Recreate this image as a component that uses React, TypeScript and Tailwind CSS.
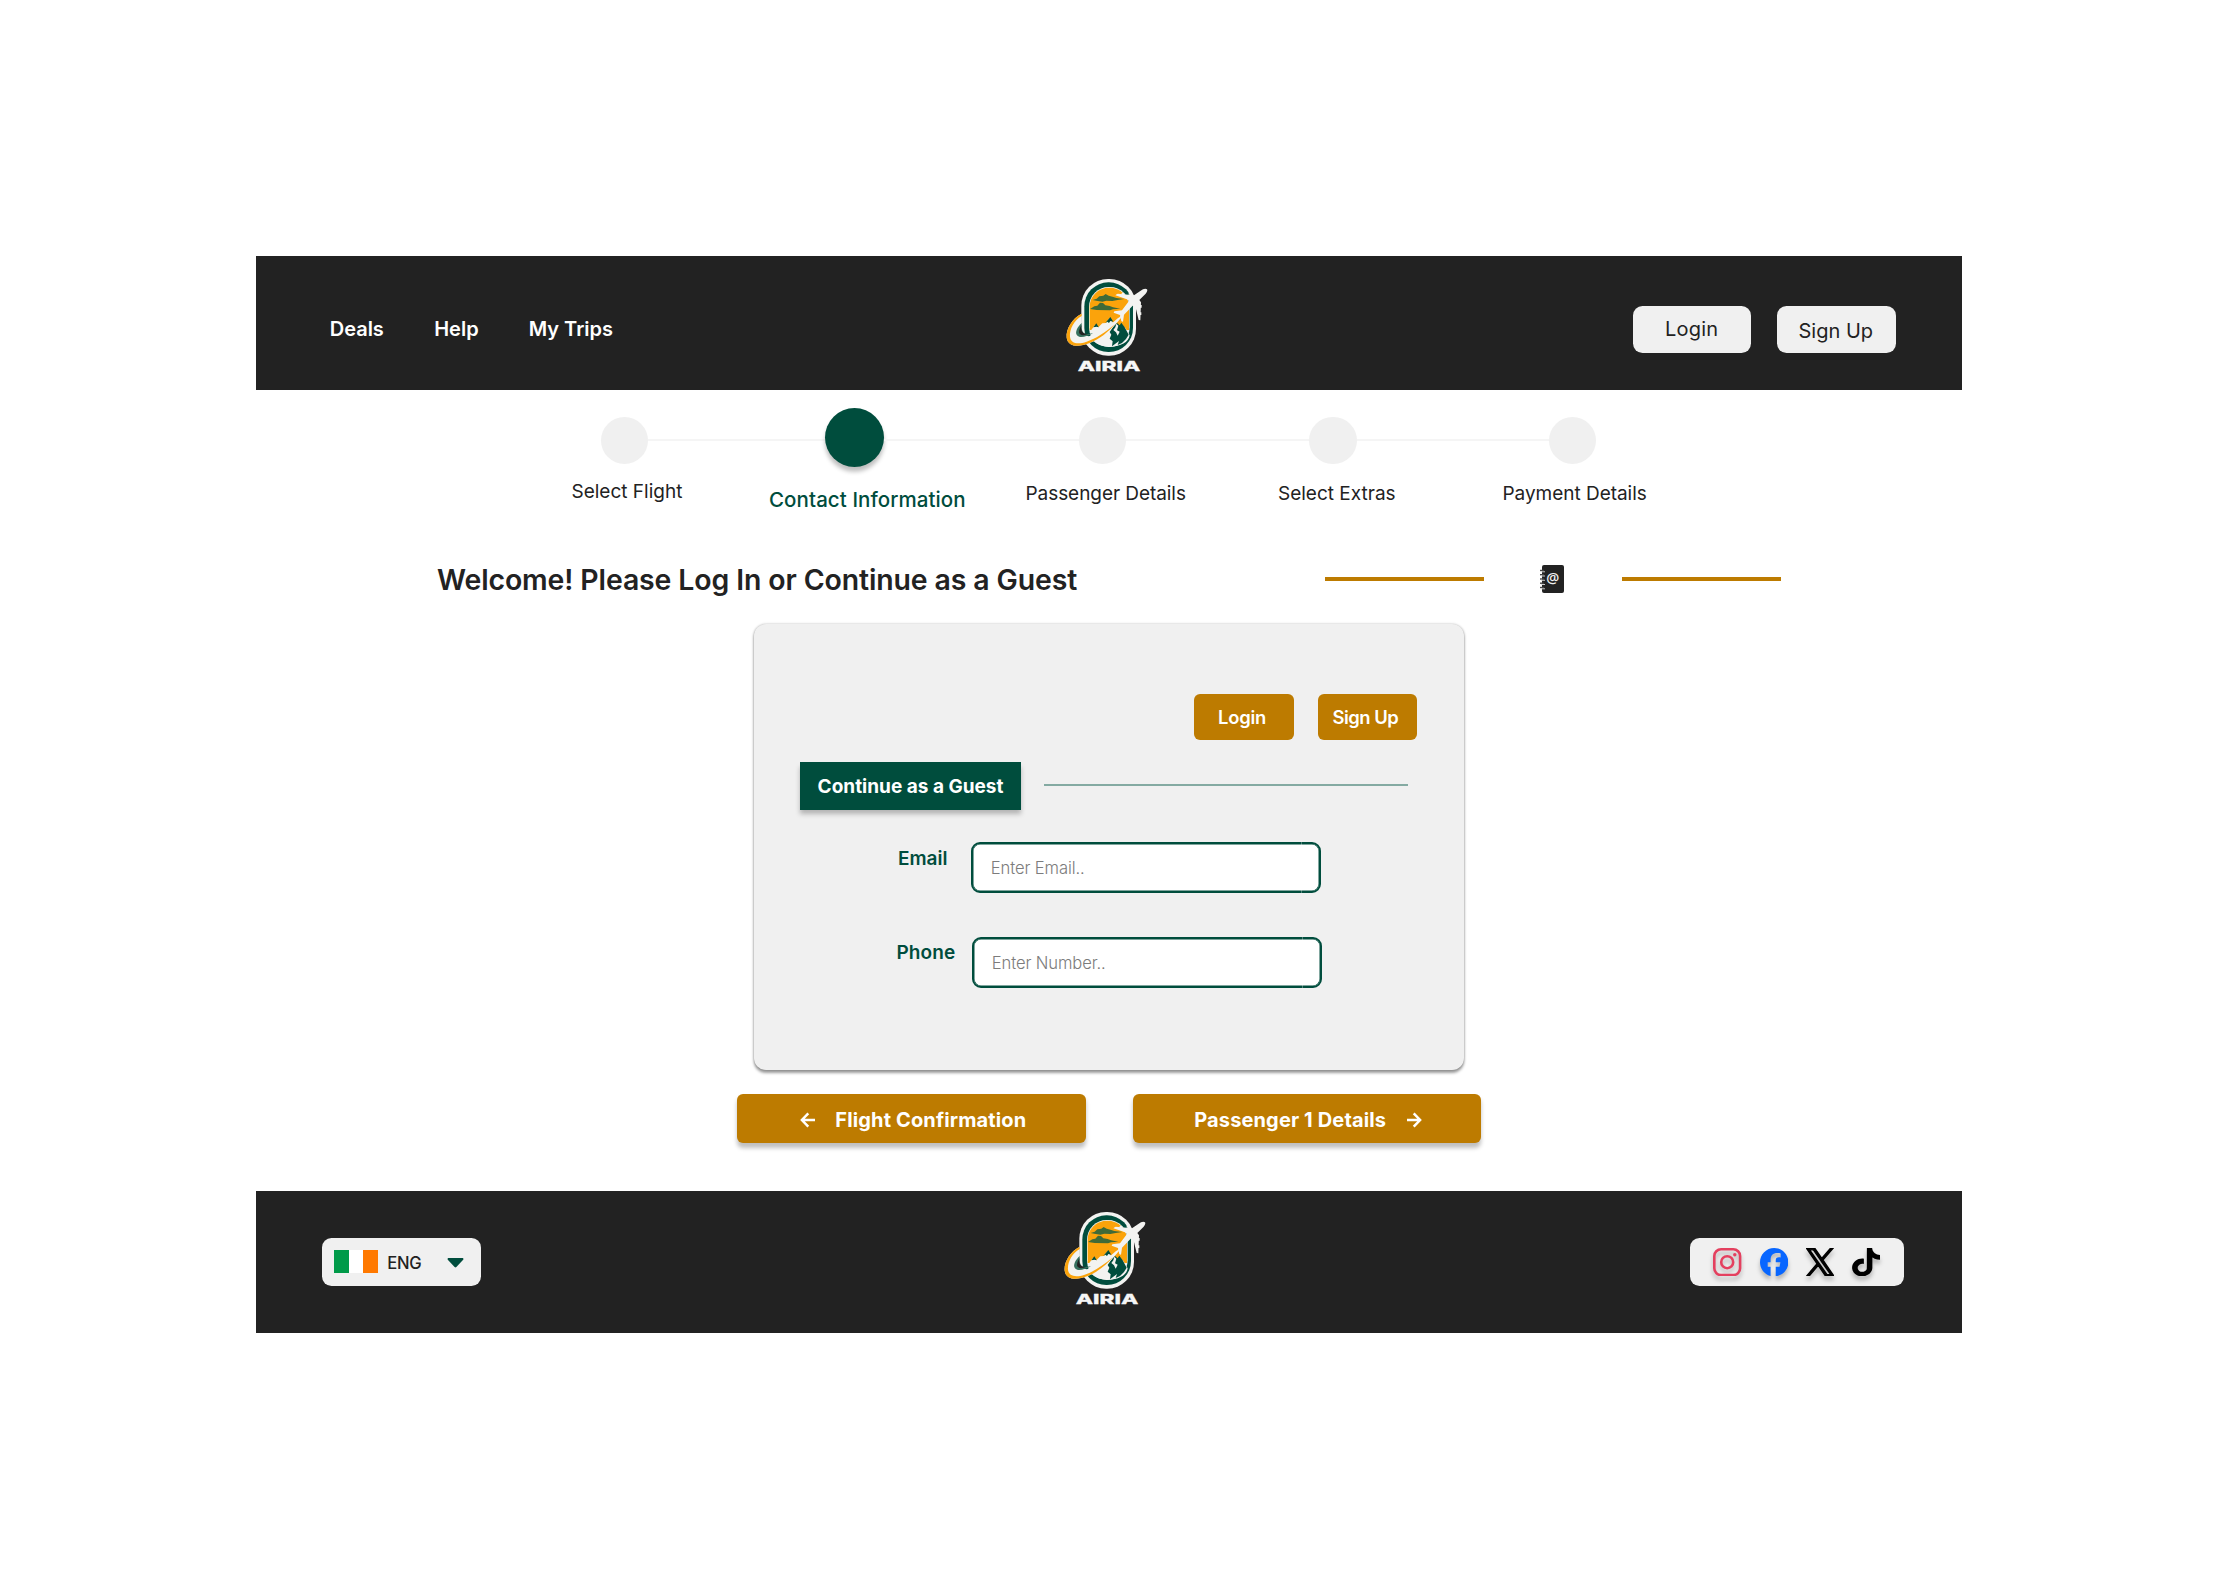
import type { ReactNode } from "react";

function Logo() {
  return (
    <svg viewBox="0 0 360 360" className="h-[120px] w-[120px] shrink-0">
      <rect x="94" y="42" width="164" height="230" rx="80" fill="#f3f3f1" />
      <rect x="103" y="52" width="146" height="209" rx="72" fill="#004d3d" />
      <rect x="117" y="66" width="122" height="180" rx="59" fill="#f3f3f1" />
      <path d="M119 125C119 92 145 68 178 68S237 92 237 125V195H119Z" fill="#fba30b" />
      <path d="M128 105l12-4 8-7 12-2 7-5 9 5 14 4 9 3 24 3-20 3-16 3-18-1-12 3-18-3z" fill="#3f6a38" />
      <path d="M120 132l13-8 9-2 8-9 9 1 7 7 13 2 10 4 22 4-22 2-9 3-40-1z" fill="#3f6a38" />
      <path d="M196 86l20 6 24 12-26-9z" fill="#f3f3f1" />
      <path d="M119 201l17-22 9 8 12-12 11-1 11-16 9 14 10 6 8 8 8-8 12 11 13 22C236 232 212 245 180 245S122 232 119 201Z" fill="#f3f3f1" />
      <path d="M130 187l9-12 7 12-6-2zM166 174l15-18 9 14-9-2-4 6-5-4z" fill="#004d3d" />
      <path d="M193 181l8-7 8 7 5-8 10 14 12 22-8 13-12 12-13 6 4-12-13 10-8 6 2-15-9-8 5-12-5-8z" fill="#004d3d" />
      <path d="M199 176l6 6-4 14 8 4-6 12-5-10-8-7 6-8z" fill="#f3f3f1" />
      <path d="M95 146C66 160 47 194 50 218C54 246 86 247 117 235C158 220 190 188 213 158L205 158C178 183 145 208 116 214L96 208Z" fill="#f3f3f1" />
      <path d="M95 146C66 160 47 194 50 218C54 246 86 247 117 235C150 222 176 200 194 178C166 202 138 221 110 230C83 239 62 235 60 215C58 193 72 166 95 153Z" fill="#fba30b" />
      <path d="M95 174C82 186 74 202 81 211C89 222 112 214 129 205L112 207C98 208 94 198 95 174Z" fill="#37715f" />
      <path d="M95 180C91 194 96 208 114 207C100 213 88 211 87 202C87 194 91 186 95 180Z" fill="#222" />
      <path d="M291 73C286 69 279 72 272 77L252 91L203 86L196 91L231 103L237 108L216 136L193 139L191 143L210 150L214 169L219 170L222 149L248 122L256 124L266 165L271 166L273 112L268 105L287 86C292 80 293 76 291 73Z" fill="#f3f3f1" />
      <path d="M222 146C210 162 188 181 166 192C183 181 204 164 217 146Z" fill="#f3f3f1" />
      <path d="M268 120h7v8h-7zM267 142h7v8h-7zM215 84h8v6h-8zM236 81h8v8h-8z" fill="#f3f3f1" />
      <text x="83" y="317" fontFamily="Inter" fontWeight="800" fontSize="41" fill="#f6f6f6" stroke="#f6f6f6" strokeWidth="0.8" textLength="188" lengthAdjust="spacingAndGlyphs">
        AIRIA
      </text>
    </svg>
  );
}

function AddressBookIcon() {
  return (
    <svg viewBox="0 0 24 28" className="mt-[4.9px] ml-[56px] h-[28px] w-[24px] shrink-0">
      <rect x="2" y="0" width="22" height="28" rx="2" fill="#222" />
      {[5.5, 9.7, 14, 18.2, 22.5].map((y) => (
        <g key={y}>
          <path d={`M0 ${y}h4`} stroke="#444" strokeWidth="1.4" />
          <path d={`M1 ${y + 1.3}h4`} stroke="#ddd" strokeWidth="0.9" />
        </g>
      ))}
      <text x="12.8" y="18.2" textAnchor="middle" fontFamily="Open Sans" fontWeight="600" fontSize="14.5" fill="#f0f0f0">
        @
      </text>
    </svg>
  );
}

function Arrow({ left = false }: { left?: boolean }) {
  return (
    <svg viewBox="0 0 16 16" className="mt-[4px] h-[16px] w-[16px] shrink-0" fill="none" stroke="#fff" strokeWidth="2.5">
      {left ? <path d="M15 8H2M8.3 1.3L1.9 8l6.4 6.7" /> : <path d="M1 8h13M7.7 1.3L14.1 8l-6.4 6.7" />}
    </svg>
  );
}

function Dot() {
  return <div className="mt-[9.5px] size-[47.4px] shrink-0 rounded-full bg-[#f0f0f0]" />;
}

function Field({ label, placeholder, className, labelClass }: { label: string; placeholder: string; className: string; labelClass: string }) {
  return (
    <div className={`flex items-start ${className}`}>
      <label className={`mt-[4.3px] shrink-0 text-[19px] leading-[24px] font-semibold text-[#004d3d] ${labelClass}`}>{label}</label>
      <div className="relative flex h-[50.4px] w-[350px] items-start rounded-[9px] border-[2px] border-[#004d3d] bg-white pt-[12.2px] pl-[17.8px] shadow-[inset_0_0_0_0.5px_#004d3d]">
        <span className="text-[16.6px] leading-[24px] font-light tracking-[-0.12px] text-[#7c7c7c]">{placeholder}</span>
        <i className="absolute -top-[2px] right-[17px] h-[3px] w-px bg-white/30" />
        <i className="absolute right-[17px] -bottom-[2px] h-[3px] w-px bg-white/30" />
      </div>
    </div>
  );
}

function HeaderButton({ children, className }: { children: ReactNode; className: string }) {
  return (
    <button className={`flex h-[47.4px] w-[118.5px] items-start rounded-[9.5px] bg-[#f0f0f0] text-[20px] leading-[24px] text-[#222] ${className}`}>
      {children}
    </button>
  );
}

export default function App() {
  return (
    <div className="h-[1589px] w-[2219px] overflow-hidden bg-white px-[256px] pt-[256px] font-['Inter',sans-serif] whitespace-nowrap text-[#222]">
      <header className="flex h-[133.5px] w-[1706px] items-start bg-[#222]">
        <nav className="flex w-[794px] pt-[61.2px] pl-[73.7px] text-[20px] leading-[24px] font-semibold text-white">
          <a className="w-[104.5px]">Deals</a>
          <a className="w-[94.5px]">Help</a>
          <a>My Trips</a>
        </nav>
        <div className="pt-[9px]">
          <Logo />
        </div>
        <div className="flex gap-[26px] pt-[49.6px] pl-[462.5px]">
          <HeaderButton className="pt-[11.7px] pl-[32.5px] tracking-[0.2px]">Login</HeaderButton>
          <HeaderButton className="pt-[13.2px] pl-[21.5px]">Sign Up</HeaderButton>
        </div>
      </header>

      <main className="h-[801px]">
        <div className="flex h-[78px] items-start pt-[18px] pl-[344.6px]">
          <Dot />
          <div className="mt-[31.5px] h-[2px] w-[176.8px] bg-[#f5f5f5]" />
          <div className="size-[59.3px] shrink-0 rounded-full bg-[#004d3d] shadow-[0_4.7px_4.7px_rgba(0,0,0,0.25)]" />
          <div className="mt-[31.5px] h-[2px] w-[195px] bg-[#f5f5f5]" />
          <Dot />
          <div className="mt-[31.5px] h-[2px] w-[183px] bg-[#f5f5f5]" />
          <Dot />
          <div className="mt-[31.5px] h-[2px] w-[192px] bg-[#f5f5f5]" />
          <Dot />
        </div>
        <div className="grid h-[92.5px] grid-cols-[197.5px_256.5px_252.5px_224.5px_auto] pt-[12.3px] pl-[315.5px] text-[19px] leading-[24px]">
          <span>Select Flight</span>
          <span className="pt-[8.5px] text-[20.5px] font-medium tracking-[0.08px] text-[#004d3d]">Contact Information</span>
          <span className="pt-[2.6px] tracking-[-0.06px]">Passenger Details</span>
          <span className="pt-[2.6px]">Select Extras</span>
          <span className="pt-[2.6px] tracking-[-0.03px]">Payment Details</span>
        </div>

        <div className="flex h-[64px] items-start">
          <h1 className="w-[1068.5px] pl-[181px] text-[28.44px] leading-[40px] font-semibold tracking-[-0.12px]">
            Welcome! Please Log In or Continue as a Guest
          </h1>
          <div className="mt-[17.2px] h-[3.6px] w-[159px] bg-[#bd7b00]" />
          <AddressBookIcon />
          <div className="mt-[17.2px] ml-[58px] h-[3.6px] w-[159px] bg-[#bd7b00]" />
        </div>

        <section className="ml-[498px] h-[445.5px] w-[710px] rounded-[12px] bg-[#f0f0f0] pt-[70px] shadow-[0_2.4px_3px_rgba(0,0,0,0.38),0_0_2.4px_rgba(0,0,0,0.25)]">
          <div className="flex gap-[24px] pl-[440px] text-[18.4px] leading-[24px] font-semibold text-white">
            <button className="flex h-[45.5px] w-[99.5px] rounded-[6px] bg-[#bd7b00] pt-[11.4px] pl-[24px] tracking-[-0.2px]">Login</button>
            <button className="flex h-[45.5px] w-[99.5px] rounded-[6px] bg-[#bd7b00] pt-[11.4px] pl-[15px] tracking-[-0.5px]">Sign Up</button>
          </div>
          <div className="mt-[22.8px] flex h-[80px] items-start pl-[46px]">
            <div className="h-[47.8px] w-[221px] bg-[#004d3d] pt-[13px] pl-[17.6px] text-[19px] leading-[24px] font-bold text-white shadow-[0_4.7px_4.7px_rgba(0,0,0,0.25)]">
              Continue as a Guest
            </div>
            <div className="mt-[21.5px] ml-[23px] h-[2px] w-[363.5px] bg-[#84aaa2]" />
          </div>
          <Field label="Email" placeholder="Enter Email.." className="pl-[144px]" labelClass="w-[73px]" />
          <Field label="Phone" placeholder="Enter Number.." className="mt-[44.5px] pl-[142.5px]" labelClass="w-[75.5px] tracking-[0.1px]" />
        </section>

        <div className="mt-[24.9px] flex gap-[47px] pl-[481px] text-[20px] leading-[24px] font-bold tracking-[0.14px] text-white">
          <button className="flex h-[48.6px] w-[348.5px] rounded-[6px] bg-[#bd7b00] pt-[13.4px] pl-[62.5px] shadow-[0_4.7px_4.7px_rgba(0,0,0,0.25)]">
            <Arrow left />
            <span className="pl-[19.8px]">Flight Confirmation</span>
          </button>
          <button className="flex h-[48.6px] w-[348.5px] rounded-[6px] bg-[#bd7b00] pt-[13.4px] pl-[61.7px] shadow-[0_4.7px_4.7px_rgba(0,0,0,0.25)]">
            <span className="w-[212px] text-left">Passenger 1 Details</span>
            <Arrow />
          </button>
        </div>
      </main>

      <footer className="flex h-[142.5px] w-[1706px] items-start bg-[#222]">
        <div className="w-[791.7px] pt-[47.7px] pl-[66px]">
          <button className="flex h-[47.4px] w-[159.3px] items-center rounded-[9.5px] bg-[#f0f0f0] pl-[12px] text-[16.6px] font-medium">
            <span className="flex h-[23px] w-[44px]">
              <i className="flex-1 bg-[#009a49]" />
              <i className="flex-1 bg-white" />
              <i className="flex-1 bg-[#ff7900]" />
            </span>
            <span className="w-[69px] pt-[2.5px] pl-[9.3px] text-left leading-[24px] tracking-[-0.3px]">ENG</span>
            <svg viewBox="0 0 17 10" className="mt-[2px] h-[10px] w-[17px]">
              <path d="M1.2 0H15.8Q17 .8 16.2 1.8L9.4 9Q8.5 9.8 7.6 9L.8 1.8Q0 .8 1.2 0Z" fill="#004d3d" />
            </svg>
          </button>
        </div>
        <div className="pt-[7px]">
          <Logo />
        </div>
        <div className="pt-[47.7px] pl-[522px]">
          <div className="flex h-[47.4px] w-[214.7px] rounded-[9.5px] bg-[#f0f0f0] pt-[9.7px] pl-[23.5px]">
            <svg viewBox="0 0 28.4 28.4" className="h-[28.4px] w-[28.4px] drop-shadow-[0_4px_2px_rgba(0,0,0,0.25)]" fill="none" stroke="#e4405f" strokeWidth="2.6">
              <rect x="1.3" y="1.3" width="25.8" height="25.8" rx="6.8" />
              <circle cx="14.2" cy="14.2" r="6" />
              <circle cx="21.8" cy="6.7" r="1.7" fill="#e4405f" stroke="none" />
            </svg>
            <svg viewBox="0 0 24 24" className="ml-[18px] h-[28.4px] w-[28.4px] drop-shadow-[0_4px_2px_rgba(0,0,0,0.25)]">
              <path fill="#0866ff" d="M24 12.073C24 5.405 18.627 0 12 0S0 5.405 0 12.073c0 5.6 3.8 10.3 8.95 11.65V15.9H6.5v-3.83h2.45V10.3c0-4.1 1.85-6 5.87-6 .76 0 2.08.15 2.62.3v3.33c-.28-.03-.78-.05-1.4-.05-1.97 0-2.74.75-2.74 2.7v1.5h3.93l-.68 3.82h-3.25v8.02C19.4 23.2 24 18.2 24 12.073z" />
            </svg>
            <svg viewBox="0 0 24 24" className="ml-[17.8px] h-[28.4px] w-[28.4px] drop-shadow-[0_4px_2px_rgba(0,0,0,0.25)]">
              <path fill="#000" d="M14.234 10.162 22.977 0h-2.072l-7.591 8.824L7.251 0H.258l9.168 13.343L.258 24H2.33l8.016-9.318L16.749 24h6.993zm-2.837 3.299-.929-1.329L3.076 1.56h3.182l5.965 8.532.929 1.329 7.754 11.09h-3.182z" stroke="#000" strokeWidth="1.2" />
            </svg>
            <svg viewBox="0 0 24 24" className="ml-[17.8px] h-[28.4px] w-[28.4px] drop-shadow-[0_4px_2px_rgba(0,0,0,0.25)]">
              <path
                transform="translate(-1.7 0) scale(1.14 1)"
                fill="#000"
                d="M12.525.02c1.31-.02 2.61-.01 3.91-.02.08 1.53.63 3.09 1.75 4.17 1.12 1.11 2.7 1.62 4.24 1.79v4.03c-1.44-.05-2.89-.35-4.2-.97-.57-.26-1.1-.59-1.62-.93-.01 2.92.01 5.84-.02 8.75-.08 1.4-.54 2.79-1.35 3.94-1.31 1.92-3.58 3.17-5.91 3.21-1.43.08-2.86-.31-4.08-1.03-2.02-1.19-3.44-3.37-3.65-5.71-.02-.5-.03-1-.01-1.49.18-1.9 1.12-3.72 2.58-4.96 1.66-1.44 3.98-2.13 6.15-1.72.02 1.48-.04 2.96-.04 4.44-.99-.32-2.15-.23-3.02.37-.63.41-1.11 1.04-1.36 1.75-.21.51-.15 1.07-.14 1.61.24 1.64 1.82 3.02 3.5 2.87 1.12-.01 2.19-.66 2.77-1.61.19-.33.4-.67.41-1.06.1-1.79.06-3.57.07-5.36.01-4.03-.01-8.05.02-12.07z"
              />
            </svg>
          </div>
        </div>
      </footer>
    </div>
  );
}
